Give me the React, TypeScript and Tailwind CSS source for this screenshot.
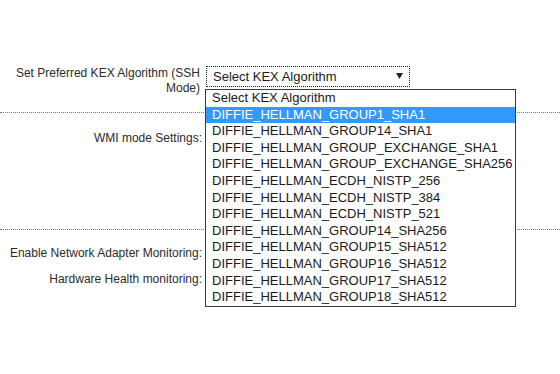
const options = [
  'Select KEX Algorithm',
  'DIFFIE_HELLMAN_GROUP1_SHA1',
  'DIFFIE_HELLMAN_GROUP14_SHA1',
  'DIFFIE_HELLMAN_GROUP_EXCHANGE_SHA1',
  'DIFFIE_HELLMAN_GROUP_EXCHANGE_SHA256',
  'DIFFIE_HELLMAN_ECDH_NISTP_256',
  'DIFFIE_HELLMAN_ECDH_NISTP_384',
  'DIFFIE_HELLMAN_ECDH_NISTP_521',
  'DIFFIE_HELLMAN_GROUP14_SHA256',
  'DIFFIE_HELLMAN_GROUP15_SHA512',
  'DIFFIE_HELLMAN_GROUP16_SHA512',
  'DIFFIE_HELLMAN_GROUP17_SHA512',
  'DIFFIE_HELLMAN_GROUP18_SHA512',
];

const Label = ({ children }: { children: React.ReactNode }) => (
  <div className="w-[203px] shrink-0 pr-[1px] text-right text-[12px] leading-[15px]">{children}</div>
);

export default function App() {
  const selected = 1;

  return (
    <div
      className="relative w-[560px] h-[374px] overflow-hidden bg-white text-[13px] leading-[15px] text-[#2b2b2b]"
      style={{ fontFamily: '"Liberation Sans", Arial, sans-serif' }}
    >
      <div className="h-[113px] border-b border-dotted border-[#777] pt-[66px]">
        <div className="flex">
          <Label>
            <span className="pr-[2px]">Set Preferred KEX Algorithm (SSH</span>
            <br />
            <span className="pr-[2px]">Mode)</span>
          </Label>
          <div className="ml-[3px] flex h-[21px] w-[204px] items-center justify-between border border-dotted border-[#222] pl-[6px] pr-[6px] text-[#1a1a1a]">
            <span>Select KEX Algorithm</span>
            <svg width="7" height="6" viewBox="0 0 7 6" className="mb-[2px]">
              <path d="M0 0 H7 L3.5 6 Z" fill="#222" />
            </svg>
          </div>
        </div>
      </div>

      <div className="h-[117px] border-b border-dotted border-[#777] pt-[18px]">
        <div className="flex">
          <Label>WMI mode Settings:</Label>
        </div>
      </div>

      <div className="flex flex-col gap-[11px] pt-[16px]">
        <div className="flex">
          <Label>
            <span className="whitespace-nowrap">Enable Network Adapter Monitoring:</span>
          </Label>
        </div>
        <div className="flex">
          <Label>Hardware Health monitoring:</Label>
        </div>
      </div>

      <ul className="absolute left-[205px] top-[89px] w-[311px] border border-[#3a3a3a] bg-white text-[#1a1a1a]">
        {options.map((o, i) => (
          <li
            key={o}
            className={
              i === selected
                ? 'h-[16.6px] whitespace-nowrap bg-[#3399ff] pl-[6px] leading-[16.6px] text-white'
                : 'h-[16.6px] whitespace-nowrap pl-[6px] leading-[16.6px]'
            }
          >
            {o}
          </li>
        ))}
      </ul>
    </div>
  );
}
